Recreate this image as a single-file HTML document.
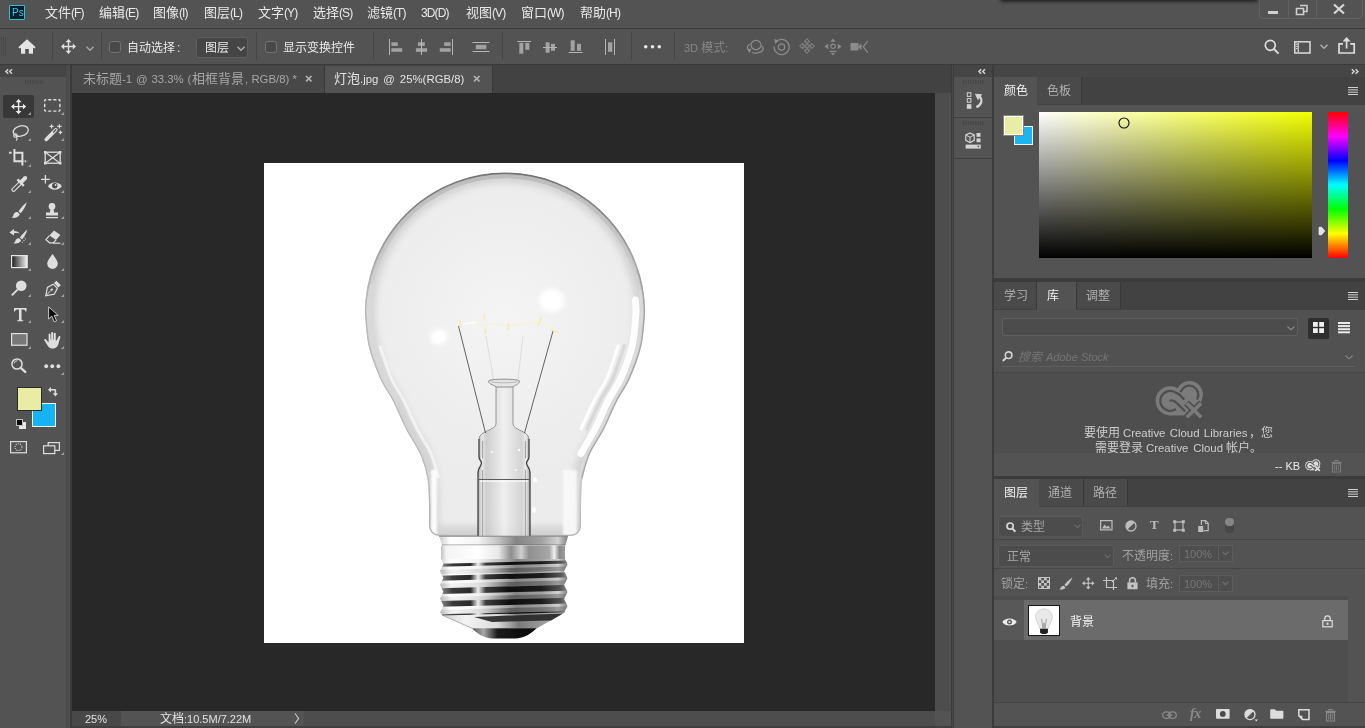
<!DOCTYPE html>
<html lang="zh-CN"><head><meta charset="utf-8"><title>Photoshop</title>
<style>
html,body{margin:0;padding:0;background:#535353;}
body{width:1365px;height:728px;overflow:hidden;font-family:"Liberation Sans","Noto Sans CJK SC",sans-serif;}
#app{position:relative;width:1365px;height:728px;overflow:hidden;background:#535353;}
.b{position:absolute;box-sizing:border-box;}
.i{position:absolute;overflow:visible;}
.t{position:absolute;white-space:nowrap;line-height:16px;height:16px;letter-spacing:0;will-change:transform;}
.c{font-family:"Liberation Sans","Noto Sans CJK SC",sans-serif;letter-spacing:0;}
.c12{font-size:12px;}
.c13{font-size:13px;}
.tj{text-align:justify;text-align-last:justify;}

</style></head>
<body>
<div id="app">
<!-- menu bar -->
<div class="b" style="left:0px;top:0px;width:1365px;height:28px;background:#535353;"></div>
<div class="b" style="left:0px;top:28px;width:1365px;height:1px;background:#3b3b3b;"></div>
<div class="b" style="left:1002px;top:-6px;width:254px;height:6px;background:#222;box-shadow:0 0 3.5px 1.5px rgba(20,20,20,.85)"></div>
<div class="b" style="left:8.8px;top:4.8px;width:16.4px;height:15.4px;background:#071d30;border:1.2px solid #2bc3cf;border-radius:1px"></div>
<div class="t " style="left:12.3px;top:4.6px;font-size:10px;color:#3ccbd6;letter-spacing:0.2px">Ps</div>
<div class="t " style="left:45px;top:4.5px;font-size:12px;color:#e8e8e8;letter-spacing:-0.9px"><span class="c c13">文件</span>(F)</div>
<div class="t " style="left:99px;top:4.5px;font-size:12px;color:#e8e8e8;letter-spacing:-0.9px"><span class="c c13">编辑</span>(E)</div>
<div class="t " style="left:153px;top:4.5px;font-size:12px;color:#e8e8e8;letter-spacing:-0.9px"><span class="c c13">图像</span>(I)</div>
<div class="t " style="left:204px;top:4.5px;font-size:12px;color:#e8e8e8;letter-spacing:-0.9px"><span class="c c13">图层</span>(L)</div>
<div class="t " style="left:258px;top:4.5px;font-size:12px;color:#e8e8e8;letter-spacing:-0.9px"><span class="c c13">文字</span>(Y)</div>
<div class="t " style="left:313px;top:4.5px;font-size:12px;color:#e8e8e8;letter-spacing:-0.9px"><span class="c c13">选择</span>(S)</div>
<div class="t " style="left:367px;top:4.5px;font-size:12px;color:#e8e8e8;letter-spacing:-0.9px"><span class="c c13">滤镜</span>(T)</div>
<div class="t " style="left:421px;top:4.5px;font-size:12px;color:#e8e8e8;letter-spacing:-0.9px">3D(D)</div>
<div class="t " style="left:466px;top:4.5px;font-size:12px;color:#e8e8e8;letter-spacing:-0.9px"><span class="c c13">视图</span>(V)</div>
<div class="t " style="left:521px;top:4.5px;font-size:12px;color:#e8e8e8;letter-spacing:-0.9px"><span class="c c13">窗口</span>(W)</div>
<div class="t " style="left:580px;top:4.5px;font-size:12px;color:#e8e8e8;letter-spacing:-0.9px"><span class="c c13">帮助</span>(H)</div>
<div class="b" style="left:1259px;top:-4px;width:104px;height:23px;background:transparent;border:1px solid #626262;border-radius:4px"></div>
<div class="b" style="left:1288px;top:0px;width:1px;height:18px;background:#626262;"></div>
<div class="b" style="left:1316px;top:0px;width:1px;height:18px;background:#626262;"></div>
<div class="b" style="left:1268px;top:11px;width:10px;height:3px;background:#cfcfcf;"></div>
<svg class="i" style="left:1296px;top:5px;" width="12" height="11" viewBox="0 0 12 11"><path d="M4 0.5h7v6h-3M0.5 3.5h7v6h-7z" fill="none" stroke="#cfcfcf" stroke-width="1.6"/></svg>
<svg class="i" style="left:1333px;top:4px;" width="12" height="10" viewBox="0 0 12 10"><path d="M1 0.5l10 9M11 0.5l-10 9" stroke="#d8d8d8" stroke-width="2.2" fill="none"/></svg>
<!-- options bar -->
<div class="b" style="left:0px;top:29px;width:1365px;height:35px;background:#535353;"></div>
<div class="b" style="left:0px;top:64px;width:1365px;height:1px;background:#3b3b3b;"></div>
<div class="b" style="left:0px;top:65px;width:1365px;height:12px;background:#424242;"></div>
<svg class="i" style="left:0px;top:37px;" width="8" height="19" viewBox="0 0 8 19"><path d="M1.5 0v19M3.5 0v19M5.5 0v19" stroke="#484848" stroke-width="1"/></svg>
<svg class="i" style="left:18px;top:39px;" width="18" height="15" viewBox="0 0 18 15"><path d="M9 0.3L0.3 8.2L1.8 9.6L3 8.5V14.7H7.2V10H10.8V14.7H15V8.5L16.2 9.6L17.7 8.2Z" fill="#e4e4e4"/></svg>
<div class="b" style="left:52px;top:32px;width:1px;height:28px;background:#454545;"></div>
<svg class="i" style="left:61px;top:39px;" width="15" height="15" viewBox="0 0 15 15"><path d="M7.5 0L4.6 3.2H6.8V6.8H3.2V4.6L0 7.5L3.2 10.4V8.2H6.8V11.8H4.6L7.5 15L10.4 11.8H8.2V8.2H11.8V10.4L15 7.5L11.8 4.6V6.8H8.2V3.2H10.4Z" fill="#e0e0e0"/></svg>
<svg class="i" style="left:86px;top:45.5px;" width="8" height="5" viewBox="0 0 8 5"><path d="M0.5 0.7L4 4.2L7.5 0.7" fill="none" stroke="#a8a8a8" stroke-width="1.4"/></svg>
<div class="b" style="left:101px;top:32px;width:1px;height:28px;background:#454545;"></div>
<div class="b" style="left:109px;top:40.5px;width:12px;height:12px;background:#484848;border:1px solid #727272;border-radius:3px"></div>
<div class="t " style="left:127px;top:40px;font-size:11px;color:#e8e8e8;"><span class="c c12">自动选择</span></div>
<div class="t " style="left:177px;top:40px;font-size:12px;color:#e8e8e8;">:</div>
<div class="b" style="left:196px;top:36.5px;width:51.5px;height:21px;background:#454545;border:1px solid #5f5f5f;border-radius:3px"></div>
<div class="t " style="left:204.5px;top:40px;font-size:11px;color:#e8e8e8;"><span class="c c12">图层</span></div>
<svg class="i" style="left:236.5px;top:45.5px;" width="8" height="5" viewBox="0 0 8 5"><path d="M0.5 0.7L4 4.2L7.5 0.7" fill="none" stroke="#b0b0b0" stroke-width="1.4"/></svg>
<div class="b" style="left:256px;top:32px;width:1px;height:28px;background:#454545;"></div>
<div class="b" style="left:265px;top:40.5px;width:12px;height:12px;background:#484848;border:1px solid #727272;border-radius:3px"></div>
<div class="t " style="left:283px;top:40px;font-size:11px;color:#e8e8e8;"><span class="c c12">显示变换控件</span></div>
<div class="b" style="left:373px;top:32px;width:1px;height:28px;background:#454545;"></div>
<svg class="i" style="left:388px;top:38px;" width="16" height="18" viewBox="0 0 16 18"><rect x="3.4" y="4.3" width="6.4" height="3.6" fill="#a2a2a2"/><rect x="3.4" y="10.2" width="10.8" height="3.6" fill="#a2a2a2"/><path d="M1.5 1V17" stroke="#b4b4b4" stroke-width="1" fill="none"/></svg>
<svg class="i" style="left:415px;top:38px;" width="14" height="18" viewBox="0 0 14 18"><rect x="3" y="4.3" width="6.8" height="3.6" fill="#a2a2a2"/><rect x="0.9" y="10.2" width="11.2" height="3.6" fill="#a2a2a2"/><path d="M6.5 1V17" stroke="#b4b4b4" stroke-width="1" fill="none"/></svg>
<svg class="i" style="left:439px;top:38px;" width="15" height="18" viewBox="0 0 15 18"><rect x="5.2" y="4.3" width="6.4" height="3.6" fill="#a2a2a2"/><rect x="0.8" y="10.2" width="10.8" height="3.6" fill="#a2a2a2"/><path d="M13.5 1V17" stroke="#b4b4b4" stroke-width="1" fill="none"/></svg>
<svg class="i" style="left:472px;top:38px;" width="18" height="18" viewBox="0 0 18 18"><rect x="3.8" y="6.8" width="10.5" height="4.4" fill="#a2a2a2"/><path d="M0.5 4.5H17.5" stroke="#b4b4b4" stroke-width="1" fill="none"/><path d="M0.5 13.5H17.5" stroke="#b4b4b4" stroke-width="1" fill="none"/></svg>
<div class="b" style="left:502px;top:32px;width:1px;height:28px;background:#454545;"></div>
<svg class="i" style="left:517px;top:38px;" width="15" height="18" viewBox="0 0 15 18"><rect x="2.3" y="4.9" width="4" height="10.8" fill="#a2a2a2"/><rect x="8.3" y="4.9" width="4" height="6.9" fill="#a2a2a2"/><path d="M0.4 3.5H14.2" stroke="#b4b4b4" stroke-width="1" fill="none"/></svg>
<svg class="i" style="left:543px;top:38px;" width="15" height="18" viewBox="0 0 15 18"><rect x="2.6" y="4.3" width="4" height="10.4" fill="#a2a2a2"/><rect x="8" y="5.8" width="4" height="7" fill="#a2a2a2"/><path d="M0 9.5H14" stroke="#b4b4b4" stroke-width="1" fill="none"/></svg>
<svg class="i" style="left:568px;top:38px;" width="15" height="18" viewBox="0 0 15 18"><rect x="2.7" y="2.3" width="4" height="10.5" fill="#a2a2a2"/><rect x="9" y="5.8" width="4" height="7" fill="#a2a2a2"/><path d="M0.8 14.5H14.6" stroke="#b4b4b4" stroke-width="1" fill="none"/></svg>
<svg class="i" style="left:604px;top:38px;" width="12" height="18" viewBox="0 0 12 18"><rect x="4" y="4.3" width="4.3" height="9.5" fill="#a2a2a2"/><path d="M1.5 1V17" stroke="#b4b4b4" stroke-width="1" fill="none"/><path d="M10.5 1V17" stroke="#b4b4b4" stroke-width="1" fill="none"/></svg>
<div class="b" style="left:631px;top:32px;width:1px;height:28px;background:#454545;"></div>
<svg class="i" style="left:643px;top:44px;" width="20" height="6" viewBox="0 0 20 6"><circle cx="2.7" cy="2.8" r="1.8" fill="#e6e6e6"/><circle cx="9.5" cy="2.8" r="1.8" fill="#e6e6e6"/><circle cx="16.3" cy="2.8" r="1.8" fill="#e6e6e6"/></svg>
<div class="b" style="left:674px;top:32px;width:1px;height:28px;background:#454545;"></div>
<div class="t " style="left:683.5px;top:40px;font-size:11px;color:#878787;">3D <span class="c c12">模式</span>:</div>
<svg class="i" style="left:745px;top:38px;" width="20" height="18" viewBox="0 0 20 18"><ellipse cx="11" cy="7" rx="5" ry="4.6" fill="none" stroke="#8c8c8c" stroke-width="1.2"/><path d="M5.5 6C2 7 1.5 10 4 12.5M7 14.5C11 16 17 14.5 18 11.5C18.5 10 17.6 8.6 16.5 8" fill="none" stroke="#8c8c8c" stroke-width="1.2"/><path d="M2 11L6.5 10.8L4.6 15Z" fill="#8c8c8c"/></svg>
<svg class="i" style="left:772px;top:37px;" width="19" height="19" viewBox="0 0 19 19"><circle cx="9.5" cy="10" r="3.2" fill="none" stroke="#8c8c8c" stroke-width="1.2"/><path d="M4 4.8A7.6 7.6 0 1 1 2 9.5" fill="none" stroke="#8c8c8c" stroke-width="1.2"/><path d="M2.2 2L6.8 3.6L3.2 7Z" fill="#8c8c8c"/></svg>
<svg class="i" style="left:798.5px;top:38.4px;" width="16" height="16" viewBox="0 0 16 16"><path d="M8 0.6L5.2 3.8H7.2V7.2H3.8V5.2L0.6 8L3.8 10.8V8.8H7.2V12.2H5.2L8 15.4L10.8 12.2H8.8V8.8H12.2V10.8L15.4 8L12.2 5.2V7.2H8.8V3.8H10.8Z" fill="none" stroke="#8c8c8c" stroke-width="0.95" stroke-linejoin="round"/></svg>
<svg class="i" style="left:824px;top:38px;" width="18" height="18" viewBox="0 0 18 18"><path d="M9 0.5L6.3 3.8H11.7ZM0.5 8.5L4.2 5.8V11.2ZM17.5 8.5L13.8 5.8V11.2ZM9 17.5L5 12.8H13Z" fill="#8c8c8c"/><circle cx="9" cy="8.3" r="2.2" fill="none" stroke="#8c8c8c" stroke-width="1.1"/><path d="M6.2 14.6H11.8" stroke="#535353" stroke-width="1"/></svg>
<svg class="i" style="left:850px;top:40px;" width="20" height="14" viewBox="0 0 20 14"><rect x="0.5" y="3" width="8" height="7.5" fill="#8c8c8c"/><path d="M8.5 6L11.5 3.6V10L8.5 7.6Z" fill="#8c8c8c"/><path d="M17.8 1L13.2 6.8L17.8 12.6" fill="none" stroke="#8c8c8c" stroke-width="1.2"/></svg>
<svg class="i" style="left:1264px;top:39px;" width="16" height="16" viewBox="0 0 16 16"><circle cx="6.3" cy="6.3" r="5" fill="none" stroke="#dcdcdc" stroke-width="1.7"/><path d="M10 10L14.6 14.6" stroke="#dcdcdc" stroke-width="2"/></svg>
<svg class="i" style="left:1294px;top:41px;" width="17" height="13" viewBox="0 0 17 13"><rect x="0.8" y="0.8" width="15.2" height="11.2" fill="none" stroke="#dcdcdc" stroke-width="1.5"/><path d="M4.2 2V11" stroke="#dcdcdc" stroke-width="1.2"/><path d="M2 3.2h1.6M2 5.4h1.6M2 7.6h1.6" stroke="#dcdcdc" stroke-width="1"/></svg>
<svg class="i" style="left:1320px;top:44px;" width="8" height="5" viewBox="0 0 8 5"><path d="M0.5 0.7L4 4.2L7.5 0.7" fill="none" stroke="#b0b0b0" stroke-width="1.4"/></svg>
<svg class="i" style="left:1338px;top:37px;" width="18" height="17" viewBox="0 0 18 17"><path d="M5 6.8H1V16H16.2V6.8H12.2" fill="none" stroke="#dcdcdc" stroke-width="1.7"/><path d="M8.6 11.5V3.2" stroke="#dcdcdc" stroke-width="1.7"/><path d="M8.6 0L4.6 4.6H12.6Z" fill="#dcdcdc"/></svg>
<!-- document window -->
<div class="b" style="left:72px;top:65px;width:880px;height:28px;background:#424242;"></div>
<div class="b" style="left:72px;top:66px;width:252px;height:27px;background:#484848;"></div>
<div class="b" style="left:324px;top:66px;width:1px;height:27px;background:#383838;"></div>
<div class="b" style="left:325px;top:66px;width:167px;height:27px;background:#535353;"></div>
<div class="b" style="left:492px;top:66px;width:1px;height:27px;background:#383838;"></div>
<div class="t " style="left:83px;top:71px;font-size:11px;color:#a6a6a6;"><span class="c c13">未标题</span></div>
<div class="t tj" style="left:122px;top:71px;font-size:11.4px;color:#a6a6a6;width:69.4px;">-1 @ 33.3% (</div>
<div class="t " style="left:191.8px;top:71px;font-size:11px;color:#a6a6a6;"><span class="c c13">相框背景</span></div>
<div class="t tj" style="left:245px;top:71px;font-size:11.4px;color:#a6a6a6;width:52px;">, RGB/8) *</div>
<svg class="i" style="left:305px;top:75px;" width="8" height="8" viewBox="0 0 8 8"><path d="M1 1L6.5 6.5M6.5 1L1 6.5" stroke="#b4b4b4" stroke-width="1.7" fill="none"/></svg>
<div class="t " style="left:334px;top:71px;font-size:11px;color:#e2e2e2;"><span class="c c13">灯泡</span></div>
<div class="t tj" style="left:360px;top:71px;font-size:11.4px;color:#e2e2e2;width:104.4px;">.jpg @ 25%(RGB/8)</div>
<svg class="i" style="left:473px;top:75px;" width="8" height="8" viewBox="0 0 8 8"><path d="M1 1L6.5 6.5M6.5 1L1 6.5" stroke="#b4b4b4" stroke-width="1.7" fill="none"/></svg>
<div class="b" style="left:72px;top:93px;width:863px;height:618px;background:#282828;"></div>
<div class="b" style="left:264px;top:163px;width:480px;height:480px;background:#fff;"></div>
<svg class="i" style="left:264px;top:163px" width="480" height="480" viewBox="264 163 480 480"><defs><radialGradient id="gl" cx="505" cy="320" r="150" gradientUnits="userSpaceOnUse"><stop offset="0" stop-color="#f4f4f4"/><stop offset="0.6" stop-color="#efefef"/><stop offset="1" stop-color="#ececec"/></radialGradient><linearGradient id="edge" x1="0" y1="173" x2="0" y2="540" gradientUnits="userSpaceOnUse"><stop offset="0" stop-color="#8f8f8f"/><stop offset="0.2" stop-color="#adadad"/><stop offset="0.45" stop-color="#cbcbcb"/><stop offset="0.75" stop-color="#d4d4d4"/><stop offset="1" stop-color="#b4b4b4"/></linearGradient><linearGradient id="band" x1="0" y1="173" x2="0" y2="335" gradientUnits="userSpaceOnUse"><stop offset="0" stop-color="#bcbcbc"/><stop offset="0.5" stop-color="#c9c9c9"/><stop offset="0.8" stop-color="#d6d6d6" stop-opacity="0.8"/><stop offset="1" stop-color="#dddddd" stop-opacity="0"/></linearGradient><filter id="bl3" x="-20%" y="-20%" width="140%" height="140%"><feGaussianBlur stdDeviation="3"/></filter><linearGradient id="rimd" x1="0" y1="173" x2="0" y2="300" gradientUnits="userSpaceOnUse"><stop offset="0" stop-color="#6f6f6f" stop-opacity="0.95"/><stop offset="0.45" stop-color="#858585" stop-opacity="0.75"/><stop offset="1" stop-color="#9a9a9a" stop-opacity="0"/></linearGradient><linearGradient id="mh" x1="440" y1="0" x2="567" y2="0" gradientUnits="userSpaceOnUse"><stop offset="0" stop-color="#b9b9b9"/><stop offset="0.05" stop-color="#f4f4f4"/><stop offset="0.3" stop-color="#ffffff"/><stop offset="0.46" stop-color="#e8e8e8"/><stop offset="0.56" stop-color="#8d8d8d"/><stop offset="0.64" stop-color="#cfcfcf"/><stop offset="0.7" stop-color="#8f8f8f"/><stop offset="0.86" stop-color="#a8a8a8"/><stop offset="0.9" stop-color="#f0f0f0"/><stop offset="0.94" stop-color="#8a8a8a"/><stop offset="1" stop-color="#a0a0a0"/></linearGradient><linearGradient id="th" x1="440" y1="0" x2="567" y2="0" gradientUnits="userSpaceOnUse"><stop offset="0" stop-color="#cfcfcf"/><stop offset="0.08" stop-color="#ffffff"/><stop offset="0.3" stop-color="#f4f4f4"/><stop offset="0.46" stop-color="#c2c2c2"/><stop offset="0.6" stop-color="#858585"/><stop offset="0.8" stop-color="#a2a2a2"/><stop offset="0.93" stop-color="#d2d2d2"/><stop offset="1" stop-color="#868686"/></linearGradient><linearGradient id="dk" x1="440" y1="0" x2="567" y2="0" gradientUnits="userSpaceOnUse"><stop offset="0" stop-color="#8c8c8c"/><stop offset="0.1" stop-color="#3a3a3a"/><stop offset="0.24" stop-color="#2a2a2a"/><stop offset="0.3" stop-color="#f0f0f0"/><stop offset="0.36" stop-color="#3c3c3c"/><stop offset="0.55" stop-color="#0e0e0e"/><stop offset="0.8" stop-color="#1c1c1c"/><stop offset="0.95" stop-color="#555"/><stop offset="1" stop-color="#888"/></linearGradient><linearGradient id="gm" x1="440" y1="0" x2="567" y2="0" gradientUnits="userSpaceOnUse"><stop offset="0" stop-color="#777" stop-opacity="0.25"/><stop offset="0.12" stop-color="#999" stop-opacity="0.12"/><stop offset="0.36" stop-color="#777" stop-opacity="0.2"/><stop offset="0.55" stop-color="#3e3e3e" stop-opacity="0.6"/><stop offset="0.85" stop-color="#4a4a4a" stop-opacity="0.5"/><stop offset="1" stop-color="#666" stop-opacity="0.4"/></linearGradient><linearGradient id="cone" x1="440" y1="0" x2="567" y2="0" gradientUnits="userSpaceOnUse"><stop offset="0" stop-color="#c9c9c9"/><stop offset="0.2" stop-color="#f4f4f4"/><stop offset="0.45" stop-color="#dcdcdc"/><stop offset="0.62" stop-color="#7a7a7a"/><stop offset="0.8" stop-color="#9a9a9a"/><stop offset="1" stop-color="#c8c8c8"/></linearGradient><linearGradient id="tip" x1="472" y1="0" x2="536" y2="0" gradientUnits="userSpaceOnUse"><stop offset="0" stop-color="#555"/><stop offset="0.18" stop-color="#a8a8a8"/><stop offset="0.4" stop-color="#1a1a1a"/><stop offset="1" stop-color="#050505"/></linearGradient><linearGradient id="stem" x1="478" y1="0" x2="530" y2="0" gradientUnits="userSpaceOnUse"><stop offset="0" stop-color="#a9a9a9"/><stop offset="0.08" stop-color="#e6e6e6"/><stop offset="0.16" stop-color="#c9c9c9"/><stop offset="0.5" stop-color="#f0f0f0"/><stop offset="0.84" stop-color="#d0d0d0"/><stop offset="0.92" stop-color="#e9e9e9"/><stop offset="1" stop-color="#9c9c9c"/></linearGradient><filter id="bl1" x="-20%" y="-20%" width="140%" height="140%"><feGaussianBlur stdDeviation="1.2"/></filter><filter id="bl2" x="-50%" y="-50%" width="200%" height="200%"><feGaussianBlur stdDeviation="2.2"/></filter><clipPath id="gclip"><path d="M365.0 313A140.0 140.0 0 0 1 645.0 313C644.4 318.5 643.8 335.0 641.2 346.0C638.6 357.0 633.5 370.0 629.5 379.0C625.5 388.0 621.8 391.7 617.5 400.0C613.2 408.3 608.6 420.1 604.0 429.0C599.4 437.9 593.6 445.4 590.0 453.6C586.4 461.8 584.0 469.8 582.5 478.0C581.0 486.2 581.2 495.3 581.0 503.0C580.8 510.7 581.0 520.5 581.0 524.0Q581.0 536.0 569.0 536.0L441.0 536.0Q429.0 536.0 429.0 524C429.0 520.5 429.2 510.7 429.0 503.0C428.8 495.3 429.0 486.2 427.5 478.0C426.0 469.8 423.6 461.8 420.0 453.6C416.4 445.4 410.6 437.9 406.0 429.0C401.4 420.1 396.8 408.3 392.5 400.0C388.2 391.7 384.4 388.0 380.5 379.0C376.6 370.0 371.4 357.0 368.8 346.0C366.2 335.0 365.6 318.5 365.0 313.0Z"/></clipPath></defs><path d="M365.0 313A140.0 140.0 0 0 1 645.0 313C644.4 318.5 643.8 335.0 641.2 346.0C638.6 357.0 633.5 370.0 629.5 379.0C625.5 388.0 621.8 391.7 617.5 400.0C613.2 408.3 608.6 420.1 604.0 429.0C599.4 437.9 593.6 445.4 590.0 453.6C586.4 461.8 584.0 469.8 582.5 478.0C581.0 486.2 581.2 495.3 581.0 503.0C580.8 510.7 581.0 520.5 581.0 524.0Q581.0 536.0 569.0 536.0L441.0 536.0Q429.0 536.0 429.0 524C429.0 520.5 429.2 510.7 429.0 503.0C428.8 495.3 429.0 486.2 427.5 478.0C426.0 469.8 423.6 461.8 420.0 453.6C416.4 445.4 410.6 437.9 406.0 429.0C401.4 420.1 396.8 408.3 392.5 400.0C388.2 391.7 384.4 388.0 380.5 379.0C376.6 370.0 371.4 357.0 368.8 346.0C366.2 335.0 365.6 318.5 365.0 313.0Z" fill="url(#gl)"/><g clip-path="url(#gclip)"><path d="M365.0 313A140.0 140.0 0 0 1 645.0 313C644.4 318.5 643.8 335.0 641.2 346.0C638.6 357.0 633.5 370.0 629.5 379.0C625.5 388.0 621.8 391.7 617.5 400.0C613.2 408.3 608.6 420.1 604.0 429.0C599.4 437.9 593.6 445.4 590.0 453.6C586.4 461.8 584.0 469.8 582.5 478.0C581.0 486.2 581.2 495.3 581.0 503.0C580.8 510.7 581.0 520.5 581.0 524.0Q581.0 536.0 569.0 536.0L441.0 536.0Q429.0 536.0 429.0 524C429.0 520.5 429.2 510.7 429.0 503.0C428.8 495.3 429.0 486.2 427.5 478.0C426.0 469.8 423.6 461.8 420.0 453.6C416.4 445.4 410.6 437.9 406.0 429.0C401.4 420.1 396.8 408.3 392.5 400.0C388.2 391.7 384.4 388.0 380.5 379.0C376.6 370.0 371.4 357.0 368.8 346.0C366.2 335.0 365.6 318.5 365.0 313.0Z" fill="none" stroke="#cdcdcd" stroke-width="20" opacity="0.8" filter="url(#bl3)"/><path d="M369.8 335A137 137 0 1 1 640.2 335" fill="none" stroke="url(#band)" stroke-width="4.6"/><path d="M635.4 300.0C635.4 301.0 635.7 304.0 635.8 306.0C635.9 308.0 636.0 310.8 636.0 312.0C636.0 313.2 636.6 307.3 636.0 313.0C635.4 318.7 634.8 335.0 632.2 346.0C629.6 357.0 624.5 370.0 620.5 379.0C616.5 388.0 612.8 391.7 608.5 400.0C604.2 408.3 599.6 420.1 595.0 429.0C590.4 437.9 583.3 449.5 581.0 453.6" fill="none" stroke="#ffffff" stroke-width="7" opacity="0.95" stroke-linecap="round"/><path d="M624.2 346.0C622.2 351.5 616.5 370.0 612.5 379.0C608.5 388.0 604.8 391.7 600.5 400.0C596.2 408.3 589.2 424.2 587.0 429.0" fill="none" stroke="#d6d6d6" stroke-width="3.5" opacity="0.9" stroke-linecap="round"/><path d="M618.2 346.0C616.2 351.5 610.5 370.0 606.5 379.0C602.5 388.0 598.8 391.7 594.5 400.0C590.2 408.3 583.2 424.2 581.0 429.0" fill="none" stroke="#ffffff" stroke-width="3" opacity="0.9" stroke-linecap="round"/><path d="M639.5 290.0C639.7 291.0 640.2 294.0 640.4 296.0C640.7 298.0 640.9 300.0 641.1 302.0C641.2 304.0 641.3 306.2 641.4 308.0C641.5 309.8 642.1 306.7 641.5 313.0C640.9 319.3 640.3 335.0 637.7 346.0C635.1 357.0 630.0 370.0 626.0 379.0C622.0 388.0 618.2 391.7 614.0 400.0C609.8 408.3 605.1 420.1 600.5 429.0C595.9 437.9 590.1 445.4 586.5 453.6C582.9 461.8 580.5 469.8 579.0 478.0C577.5 486.2 577.8 495.3 577.5 503.0C577.2 510.7 577.5 520.5 577.5 524.0" fill="none" stroke="#dcdcdc" stroke-width="2.5" opacity="0.8"/><path d="M372.9 285.0C372.7 286.0 372.1 289.0 371.8 291.0C371.5 293.0 371.2 295.0 371.0 297.0C370.7 299.0 370.5 301.0 370.4 303.0C370.2 305.0 370.1 307.3 370.1 309.0C370.0 310.7 369.4 306.8 370.0 313.0C370.6 319.2 371.2 335.0 373.8 346.0C376.4 357.0 381.6 370.0 385.5 379.0C389.4 388.0 395.5 396.5 397.5 400.0" fill="none" stroke="#dadada" stroke-width="6" opacity="0.75"/><path d="M379.8 346.0C381.8 351.5 387.6 370.0 391.5 379.0C395.4 388.0 399.2 391.7 403.5 400.0C407.8 408.3 412.4 420.1 417.0 429.0C421.6 437.9 427.4 445.4 431.0 453.6C434.6 461.8 437.2 473.9 438.5 478.0" fill="none" stroke="#f6f6f6" stroke-width="3" opacity="0.8"/><path d="M431 470V536H437V470Z" fill="#ffffff" opacity="0.9" filter="url(#bl1)"/><path d="M563 470V536H577V470Z" fill="#fafafa" opacity="0.9" filter="url(#bl1)"/></g><path d="M365.6 313A139.4 139.4 0 0 1 644.4 313C643.8 318.5 643.2 335.0 640.6 346.0C638.0 357.0 632.9 370.0 628.9 379.0C624.9 388.0 621.1 391.7 616.9 400.0C612.6 408.3 608.0 420.1 603.4 429.0C598.8 437.9 593.0 445.4 589.4 453.6C585.8 461.8 583.4 469.8 581.9 478.0C580.4 486.2 580.6 495.3 580.4 503.0C580.1 510.7 580.4 520.5 580.4 524.0Q580.4 535.4 569.0 535.4L441.0 535.4Q429.6 535.4 429.6 524C429.6 520.5 429.9 510.7 429.6 503.0C429.4 495.3 429.6 486.2 428.1 478.0C426.6 469.8 424.2 461.8 420.6 453.6C417.0 445.4 411.2 437.9 406.6 429.0C402.0 420.1 397.4 408.3 393.1 400.0C388.9 391.7 385.1 388.0 381.1 379.0C377.2 370.0 372.0 357.0 369.4 346.0C366.8 335.0 366.2 318.5 365.6 313.0Z" fill="none" stroke="url(#edge)" stroke-width="1.3"/><path d="M368.5 290A138.4 138.4 0 0 1 641.5 290" fill="none" stroke="#b8b8b8" stroke-width="1.1" opacity="0.6"/><path d="M366.0 300A139.6 139.6 0 0 1 644.0 300" fill="none" stroke="url(#rimd)" stroke-width="1.5"/><path d="M637.6 270.0C637.9 271.0 638.8 274.0 639.4 276.0C640.0 278.0 640.5 280.0 640.9 282.0C641.4 284.0 641.8 286.0 642.1 288.0C642.5 290.0 642.8 292.0 643.1 294.0C643.4 296.0 643.6 298.0 643.8 300.0C644.0 302.0 644.1 304.0 644.2 306.0C644.3 308.0 644.4 310.8 644.4 312.0C644.4 313.2 645.0 307.3 644.4 313.0C643.8 318.7 643.2 335.0 640.6 346.0C638.0 357.0 632.9 370.0 628.9 379.0C624.9 388.0 621.1 391.7 616.9 400.0C612.6 408.3 608.0 420.1 603.4 429.0C598.8 437.9 593.0 445.4 589.4 453.6C585.8 461.8 583.1 473.9 581.9 478.0" fill="none" stroke="#9a9a9a" stroke-width="1.2" opacity="0.8"/><path d="M367.5 290.0C367.4 291.0 366.9 294.0 366.6 296.0C366.4 298.0 366.2 300.0 366.0 302.0C365.9 304.0 365.8 306.2 365.7 308.0C365.6 309.8 365.0 306.7 365.6 313.0C366.2 319.3 366.8 335.0 369.4 346.0C372.0 357.0 377.2 370.0 381.1 379.0C385.1 388.0 388.9 391.7 393.1 400.0C397.4 408.3 402.0 420.1 406.6 429.0C411.2 437.9 417.0 445.4 420.6 453.6C424.2 461.8 426.6 469.8 428.1 478.0C429.6 486.2 429.4 495.3 429.6 503.0C429.9 510.7 429.6 520.5 429.6 524.0" fill="none" stroke="#b4b4b4" stroke-width="1.1" opacity="0.8"/><ellipse cx="551.5" cy="300.5" rx="13" ry="12" fill="#ffffff" opacity="0.9" filter="url(#bl2)"/><ellipse cx="551.5" cy="300.5" rx="9.5" ry="8.5" fill="#ffffff"/><ellipse cx="439" cy="337" rx="9" ry="8" fill="#ffffff" opacity="0.9" filter="url(#bl2)"/><ellipse cx="439" cy="337" rx="6.5" ry="5.5" fill="#ffffff"/><path d="M496 386V424C496 430 479 431 479 439V457C479 460 481.5 461 481.5 463C481.5 466 478 468 478 472V536H530V472C530 468 526.5 466 526.5 463C526.5 461 529 460 529 457V439C529 431 513 430 513 424V386Z" fill="url(#stem)" opacity="0.85"/><path d="M496 386V424C496 430 479 431 479 439M513 386V424C513 430 529 431 529 439" fill="none" stroke="#8c8c8c" stroke-width="0.9"/><path d="M479 439V457C479 460 481.5 461 481.5 463C481.5 466 478 468 478 472V536M529 439V457C529 460 526.5 461 526.5 463C526.5 466 530 468 530 472V536" fill="none" stroke="#3c3c3c" stroke-width="1.25"/><path d="M482.6 441V458M482.6 470V536M525.4 441V458M525.4 470V536" stroke="#8e8e8e" stroke-width="0.8" fill="none"/><path d="M479 479.5H529" stroke="#5c5c5c" stroke-width="1.1"/><path d="M480 481.2H528" stroke="#fff" stroke-width="1.2" opacity="0.9"/><path d="M488.5 381C488.5 378.6 519.5 378.6 519.5 381C519.5 384.4 514 385.4 513 387H496C495 385.4 488.5 384.4 488.5 381Z" fill="#e4e4e4" stroke="#858585" stroke-width="0.9"/><path d="M491 381.6C497 383.2 511 383.2 517 381.6" fill="none" stroke="#adadad" stroke-width="0.8"/><circle cx="492" cy="452" r="1" fill="#fff"/><circle cx="519" cy="450" r="1.2" fill="#fff"/><circle cx="516" cy="470" r="1" fill="#fff"/><ellipse cx="535" cy="480" rx="2.2" ry="2.6" fill="#fff"/><ellipse cx="534" cy="510" rx="2" ry="3" fill="#fff" opacity="0.9"/><path d="M458.5 326L485.5 433M553 331L524.5 433" stroke="#333" stroke-width="0.75" fill="none"/><path d="M486 336L493.5 379M523 336L518 379" stroke="#d2d2d2" stroke-width="0.7" fill="none"/><path d="M460 325L470 323L484 325L497 324L508 326L522 324L538 322L548 326L556 331" fill="none" stroke="#f6f3d0" stroke-width="1.3" opacity="0.9"/><path d="M460 320V328M484.4 314.5V320M485.5 329V333.5M508.3 322.5V329.5M541.5 317L538 325M552 330L558 333" stroke="#f4e9ac" stroke-width="1.6" fill="none" stroke-linecap="round" opacity="0.8"/><path d="M463 324L476 322.5" stroke="#ffffff" stroke-width="1.4" opacity="0.9"/><path d="M439 536H568L565.5 545H442Z" fill="url(#th)"/><path d="M439 536.3H568" stroke="#8a8a8a" stroke-width="1.1"/><path d="M442 545H565.5" stroke="#4a4a4a" stroke-width="1" opacity="0.55"/><rect x="441" y="545.5" width="124" height="14" fill="url(#mh)"/><clipPath id="tclip"><path d="M441 559L443.5 564.2L440.0 571.0L443.5 578.0L440.0 584.8L443.5 591.8L440.0 598.6L443.5 605.6L440.0 612.4L443 616L565 613L564.0 612.7L567.5 605.9L564.0 598.9L567.5 592.1L564.0 585.1L567.5 578.3L564.0 571.3L567.5 564.5L565 559Z"/></clipPath><path d="M441 559L443.5 564.2L440.0 571.0L443.5 578.0L440.0 584.8L443.5 591.8L440.0 598.6L443.5 605.6L440.0 612.4L443 616L565 613L564.0 612.7L567.5 605.9L564.0 598.9L567.5 592.1L564.0 585.1L567.5 578.3L564.0 571.3L567.5 564.5L565 559Z" fill="url(#th)"/><g clip-path="url(#tclip)"><path d="M438 569.8L570 566.4V570.8L438 574.2Z" fill="url(#gm)"/><path d="M438 563.8L570 560.4V563.4L438 566.8Z" fill="url(#dk)"/><path d="M438 583.7L570 580.3V584.7L438 588.1Z" fill="url(#gm)"/><path d="M438 575.7L570 572.3V577.3L438 580.7Z" fill="url(#dk)"/><path d="M438 597.0L570 593.6V598.0L438 601.4Z" fill="url(#gm)"/><path d="M438 588.2L570 584.8V590.6L438 594.0Z" fill="url(#dk)"/><path d="M438 609.9L570 606.5V610.9L438 614.3Z" fill="url(#gm)"/><path d="M438 601.1L570 597.7V603.5L438 606.9Z" fill="url(#dk)"/><path d="M438 622.4L570 619.0V623.4L438 626.8Z" fill="url(#gm)"/><path d="M438 614.4L570 611.0V616.0L438 619.4Z" fill="url(#dk)"/></g><path d="M443 615.5L565 612.5L536.5 628.5H472Z" fill="url(#cone)"/><path d="M474 617L563 613.5L551 620.5L492 622Z" fill="#262626" opacity="0.9"/><path d="M444 616L472 628.2" stroke="#a0a0a0" stroke-width="0.8"/><path d="M472 628.2H536.5C532 633 524 638.4 515 638.6H493C484 638.4 476 633 472 628.2Z" fill="url(#tip)"/></svg>
<div class="b" style="left:935px;top:93px;width:16px;height:618px;background:#4d4d4d;"></div>
<div class="b" style="left:72px;top:711px;width:880px;height:17px;background:#4d4d4d;"></div>
<div class="b" style="left:72px;top:711px;width:49px;height:15px;background:#484848;"></div>
<div class="b" style="left:121px;top:711px;width:183px;height:15px;background:#535353;"></div>
<div class="b" style="left:935px;top:711px;width:16px;height:15px;background:#535353;"></div>
<div class="b" style="left:72px;top:726px;width:880px;height:2px;background:#3f3f3f;"></div>
<div class="t " style="left:85px;top:710.5px;font-size:11px;color:#e2e2e2;">25%</div>
<div class="t " style="left:159.5px;top:710.5px;font-size:11px;color:#e2e2e2;"><span class="c c12">文档</span></div>
<div class="t " style="left:183.5px;top:710.5px;font-size:11px;color:#e2e2e2;">:10.5M/7.22M</div>
<svg class="i" style="left:294px;top:713px;" width="6" height="11" viewBox="0 0 6 11"><path d="M1 0.5L4.6 5.5L1 10.5" fill="none" stroke="#d0d0d0" stroke-width="1.1"/></svg>
<!-- tool bar -->
<div class="b" style="left:0px;top:65px;width:70px;height:12px;background:#454545;"></div>
<div class="b" style="left:0px;top:77px;width:70px;height:651px;background:#535353;"></div>
<div class="b" style="left:66px;top:65px;width:3px;height:663px;background:#4b4b4b;"></div>
<div class="b" style="left:69px;top:65px;width:1px;height:663px;background:#505050;"></div>
<div class="b" style="left:70px;top:65px;width:2px;height:663px;background:#3a3a3a;"></div>
<svg class="i" style="left:5px;top:68.5px;" width="8" height="5" viewBox="0 0 8 5"><path d="M3.2 0.2L0.9 2.5L3.2 4.8M7 0.2L4.7 2.5L7 4.8" fill="none" stroke="#d4d4d4" stroke-width="1.5"/></svg>
<svg class="i" style="left:25px;top:80.2px;" width="20" height="4" viewBox="0 0 20 4"><rect x="0.0" y="0" width="1" height="4" fill="#454545"/><rect x="2.45" y="0" width="1" height="4" fill="#454545"/><rect x="4.9" y="0" width="1" height="4" fill="#454545"/><rect x="7.3500000000000005" y="0" width="1" height="4" fill="#454545"/><rect x="9.8" y="0" width="1" height="4" fill="#454545"/><rect x="12.25" y="0" width="1" height="4" fill="#454545"/><rect x="14.700000000000001" y="0" width="1" height="4" fill="#454545"/><rect x="17.150000000000002" y="0" width="1" height="4" fill="#454545"/></svg>
<div class="b" style="left:3px;top:94.5px;width:30.5px;height:23px;background:#383838;border-radius:2px"></div>
<svg class="i" style="left:28.2px;top:112px;" width="3" height="3" viewBox="0 0 3 3"><path d="M2.9 0V2.9H0Z" fill="#a4a4a4"/></svg>
<svg class="i" style="left:61.4px;top:112px;" width="3" height="3" viewBox="0 0 3 3"><path d="M2.9 0V2.9H0Z" fill="#a4a4a4"/></svg>
<svg class="i" style="left:28.2px;top:138px;" width="3" height="3" viewBox="0 0 3 3"><path d="M2.9 0V2.9H0Z" fill="#a4a4a4"/></svg>
<svg class="i" style="left:61.4px;top:138px;" width="3" height="3" viewBox="0 0 3 3"><path d="M2.9 0V2.9H0Z" fill="#a4a4a4"/></svg>
<svg class="i" style="left:28.2px;top:164px;" width="3" height="3" viewBox="0 0 3 3"><path d="M2.9 0V2.9H0Z" fill="#a4a4a4"/></svg>
<svg class="i" style="left:28.2px;top:190px;" width="3" height="3" viewBox="0 0 3 3"><path d="M2.9 0V2.9H0Z" fill="#a4a4a4"/></svg>
<svg class="i" style="left:61.4px;top:190px;" width="3" height="3" viewBox="0 0 3 3"><path d="M2.9 0V2.9H0Z" fill="#a4a4a4"/></svg>
<svg class="i" style="left:28.2px;top:216px;" width="3" height="3" viewBox="0 0 3 3"><path d="M2.9 0V2.9H0Z" fill="#a4a4a4"/></svg>
<svg class="i" style="left:61.4px;top:216px;" width="3" height="3" viewBox="0 0 3 3"><path d="M2.9 0V2.9H0Z" fill="#a4a4a4"/></svg>
<svg class="i" style="left:28.2px;top:242px;" width="3" height="3" viewBox="0 0 3 3"><path d="M2.9 0V2.9H0Z" fill="#a4a4a4"/></svg>
<svg class="i" style="left:61.4px;top:242px;" width="3" height="3" viewBox="0 0 3 3"><path d="M2.9 0V2.9H0Z" fill="#a4a4a4"/></svg>
<svg class="i" style="left:28.2px;top:268px;" width="3" height="3" viewBox="0 0 3 3"><path d="M2.9 0V2.9H0Z" fill="#a4a4a4"/></svg>
<svg class="i" style="left:61.4px;top:268px;" width="3" height="3" viewBox="0 0 3 3"><path d="M2.9 0V2.9H0Z" fill="#a4a4a4"/></svg>
<svg class="i" style="left:28.2px;top:294px;" width="3" height="3" viewBox="0 0 3 3"><path d="M2.9 0V2.9H0Z" fill="#a4a4a4"/></svg>
<svg class="i" style="left:61.4px;top:294px;" width="3" height="3" viewBox="0 0 3 3"><path d="M2.9 0V2.9H0Z" fill="#a4a4a4"/></svg>
<svg class="i" style="left:28.2px;top:320px;" width="3" height="3" viewBox="0 0 3 3"><path d="M2.9 0V2.9H0Z" fill="#a4a4a4"/></svg>
<svg class="i" style="left:61.4px;top:320px;" width="3" height="3" viewBox="0 0 3 3"><path d="M2.9 0V2.9H0Z" fill="#a4a4a4"/></svg>
<svg class="i" style="left:28.2px;top:346px;" width="3" height="3" viewBox="0 0 3 3"><path d="M2.9 0V2.9H0Z" fill="#a4a4a4"/></svg>
<svg class="i" style="left:61.4px;top:346px;" width="3" height="3" viewBox="0 0 3 3"><path d="M2.9 0V2.9H0Z" fill="#a4a4a4"/></svg>
<svg class="i" style="left:61.4px;top:372px;" width="3" height="3" viewBox="0 0 3 3"><path d="M2.9 0V2.9H0Z" fill="#a4a4a4"/></svg>
<svg class="i" style="left:61.4px;top:452px;" width="3" height="3" viewBox="0 0 3 3"><path d="M2.9 0V2.9H0Z" fill="#a4a4a4"/></svg>
<svg class="i" style="left:11px;top:99px;" width="15.2" height="15.2" viewBox="0 0 15 15"><path d="M7.5 0L4.6 3.2H6.8V6.8H3.2V4.6L0 7.5L3.2 10.4V8.2H6.8V11.8H4.6L7.5 15L10.4 11.8H8.2V8.2H11.8V10.4L15 7.5L11.8 4.6V6.8H8.2V3.2H10.4Z" fill="#ececec"/></svg>
<svg class="i" style="left:43.7px;top:99.2px;" width="16.6" height="12.8" viewBox="0 0 16.6 12.8"><path d="M0.7 0.7H15.9M0.7 12.1H15.9" fill="none" stroke="#dedede" stroke-width="1.4" stroke-dasharray="3.1 1.97" stroke-dashoffset="1.55"/><path d="M0.7 0.7V12.1M15.9 0.7V12.1" fill="none" stroke="#dedede" stroke-width="1.4" stroke-dasharray="3.5 2.2" stroke-dashoffset="1.75"/></svg>
<svg class="i" style="left:11.5px;top:124.8px;" width="17" height="16" viewBox="0 0 17 16"><ellipse cx="8.8" cy="6" rx="7.6" ry="5.1" transform="rotate(-14 8.8 6)" fill="none" stroke="#dedede" stroke-width="1.3"/><circle cx="3.4" cy="10.6" r="1.7" fill="none" stroke="#dedede" stroke-width="1.1"/><path d="M4.4 12C5.4 13 5 14.6 4.2 15.6" fill="none" stroke="#dedede" stroke-width="1.1"/></svg>
<svg class="i" style="left:44px;top:123.6px;" width="18.5" height="17.5" viewBox="0 0 18.5 17.5"><path d="M2.2 15.4L11.8 5.8" stroke="#dedede" stroke-width="3.6" stroke-linecap="round" fill="none"/><path d="M9.6 8L11.8 5.8" stroke="#535353" stroke-width="1.4" stroke-linecap="round" fill="none"/><path d="M7.6 0.4V4.4M5.6 2.4H9.6M15.4 0.2V4.6M13.2 2.4H17.6M16.4 6.6V10.2M14.6 8.4H18.2" fill="none" stroke="#dedede" stroke-width="1.1"/></svg>
<svg class="i" style="left:9.2px;top:149.2px;" width="18.6" height="16.6" viewBox="0 0 18.6 16.6"><path d="M5.4 0V12.2H14.6M0 3.8H2.6M5.4 3.8H13.4V16.4" fill="none" stroke="#dedede" stroke-width="2"/><path d="M15.6 12.2H18.2" fill="none" stroke="#dedede" stroke-width="2" stroke-dasharray="1.3 1"/></svg>
<svg class="i" style="left:44.3px;top:151.2px;" width="17.4" height="13.4" viewBox="0 0 17.4 13.4"><rect x="1.2" y="1.2" width="15" height="11" fill="none" stroke="#dedede" stroke-width="1.3"/><path d="M1.2 1.2L16.2 12.2M16.2 1.2L1.2 12.2" fill="none" stroke="#dedede" stroke-width="1.2"/><path d="M0 0h2.4v2.4h-2.4zM15 0h2.4v2.4h-2.4zM0 11h2.4v2.4h-2.4zM15 11h2.4v2.4h-2.4z" fill="#dedede"/></svg>
<svg class="i" style="left:10.5px;top:176px;" width="16.8" height="16.2" viewBox="0 0 16.8 16.2"><path d="M1.4 15L0.9 13.2L8.4 5.7L10.6 7.9L3.1 15.4Z" fill="none" stroke="#dedede" stroke-width="1.1"/><path d="M6.4 3.4L12.8 9.8" stroke="#dedede" stroke-width="2.4" fill="none"/><path d="M10.4 5.8L14.2 2" stroke="#dedede" stroke-width="4" stroke-linecap="round" fill="none"/></svg>
<svg class="i" style="left:40.8px;top:175px;" width="21" height="15.6" viewBox="0 0 21 15.6"><path d="M4.4 0V8.6M0 4.3H8.8" fill="none" stroke="#dedede" stroke-width="1.3"/><path d="M7 11.2C9.6 6.4 18 6.4 20.8 11.2C18 15.8 9.6 15.8 7 11.2Z" fill="#dedede"/><circle cx="13.8" cy="10.8" r="2.7" fill="#4a4a4a"/><circle cx="14.6" cy="10" r="0.9" fill="#dedede"/></svg>
<svg class="i" style="left:10.7px;top:202px;" width="16" height="16.2" viewBox="0 0 16 16.2"><path d="M15.7 0.2C12.8 2.6 9.4 6.4 7.5 9.2L9.5 11.2C12.2 8.6 14.8 4.2 15.7 0.2Z" fill="#dedede"/><path d="M6.6 10C4.2 9.6 2.6 11.4 2.4 13.2C2.2 14.4 1.3 15.2 0.3 15.6C3.6 16.5 7.8 15.2 8.8 12.2Z" fill="#dedede"/></svg>
<svg class="i" style="left:45.4px;top:202.6px;" width="14" height="15.6" viewBox="0 0 14 15.6"><circle cx="7" cy="3.4" r="3.3" fill="#dedede"/><path d="M5.6 5.6L4.8 9.6H1V12.4H13V9.6H9.2L8.4 5.6Z" fill="#dedede"/><path d="M1 14.6H13" fill="none" stroke="#dedede" stroke-width="1.3"/></svg>
<svg class="i" style="left:9.4px;top:228.4px;" width="18.6" height="16.2" viewBox="0 0 18.6 16.2"><g transform="translate(4.2 1.2) scale(0.9)"><path d="M15.7 0.2C12.8 2.6 9.4 6.4 7.5 9.2L9.5 11.2C12.2 8.6 14.8 4.2 15.7 0.2Z" fill="#dedede"/><path d="M6.6 10C4.2 9.6 2.6 11.4 2.4 13.2C2.2 14.4 1.3 15.2 0.3 15.6C3.6 16.5 7.8 15.2 8.8 12.2Z" fill="#dedede"/></g><path d="M0.4 4.4L5 1V3C8 3 9.8 4 10.4 5.6C8.8 5 7 5 5 5.2V7.4Z" fill="#dedede"/><path d="M13.4 10.2v1M15 8.6v1M15 12v1M13.4 13.8v1M16.6 10.4v1" fill="none" stroke="#dedede" stroke-width="1"/></svg>
<svg class="i" style="left:45px;top:229.6px;" width="16" height="14" viewBox="0 0 16 14"><path d="M9 0.5L15.4 5L11 9.9L4.4 5.6Z" fill="#dedede"/><path d="M4.4 5.6L0.9 9.6L4.6 12.8H8.4L11 9.9" fill="none" stroke="#dedede" stroke-width="1.2"/><path d="M8 13.2H15.4" fill="none" stroke="#dedede" stroke-width="1.2"/></svg>
<svg class="i" style="left:10.7px;top:255px;" width="16.8" height="13.2" viewBox="0 0 16.8 13.2"><defs><linearGradient id="tg"><stop offset="0" stop-color="#1c1c1c"/><stop offset="1" stop-color="#f2f2f2"/></linearGradient></defs><rect x="0.6" y="0.6" width="15.6" height="12" fill="url(#tg)" stroke="#e6e6e6" stroke-width="1.2"/></svg>
<svg class="i" style="left:46.6px;top:254px;" width="11" height="15" viewBox="0 0 11 15"><path d="M5.5 0C5.5 0 10.8 6.6 10.8 9.6A5.3 5.3 0 0 1 0.2 9.6C0.2 6.6 5.5 0 5.5 0Z" fill="#dedede"/></svg>
<svg class="i" style="left:10.8px;top:280.3px;" width="16" height="16" viewBox="0 0 16 16"><circle cx="10.2" cy="5.8" r="5.3" fill="#dedede"/><path d="M6.6 9.6L0.8 15.4" stroke="#dedede" stroke-width="1.9" fill="none"/></svg>
<svg class="i" style="left:44.6px;top:280.8px;" width="16" height="15.4" viewBox="0 0 16 15.4"><path d="M0.7 14.8L2.4 6.4L8.2 3.2L12.4 7.4L9.2 13.2Z" fill="none" stroke="#dedede" stroke-width="1.2"/><path d="M0.9 14.6L6 9.4" fill="none" stroke="#dedede" stroke-width="1"/><circle cx="6.8" cy="8.6" r="1.2" fill="#dedede"/><path d="M9 2L11.4 -0.2L15.8 4.2L13.4 6.6Z" fill="#dedede"/></svg>
<svg class="i" style="left:14px;top:307.6px;" width="12.6" height="13.4" viewBox="0 0 12.6 13.4"><path d="M0 0H12.5V3.6H11.5C11.3 2.2 10.6 1.5 9.2 1.5H7.5V11C7.5 12 7.9 12.3 9.3 12.4V13.3H3.2V12.4C4.6 12.3 5 12 5 11V1.5H3.3C1.9 1.5 1.2 2.2 1 3.6H0Z" fill="#dedede"/></svg>
<svg class="i" style="left:47.8px;top:306px;" width="10.6" height="16.6" viewBox="0 0 10.6 16.6"><path d="M0.6 0.8V13L3.8 10.2L6.2 15.8L8.6 14.8L6.2 9.4H10.2Z" fill="#0c0c0c" stroke="#c8c8c8" stroke-width="1"/></svg>
<svg class="i" style="left:10.7px;top:333px;" width="16.6" height="12.8" viewBox="0 0 16.6 12.8"><rect x="0.6" y="0.6" width="15.4" height="11.6" fill="#787878" stroke="#e2e2e2" stroke-width="1.2"/></svg>
<svg class="i" style="left:43.8px;top:331.5px;" width="16.6" height="16.6" viewBox="0 0 16.6 16.6"><path d="M4.6 9V2.6A1 1 0 0 1 6.6 2.6V7.5H7.2V1A1 1 0 0 1 9.2 1V7.5H9.8V1.8A1 1 0 0 1 11.8 1.8V8.2L12.6 8.4L14.6 4.4A1 1 0 0 1 16.4 5.2L14.8 10.6C14.2 14.4 12 16.6 9 16.6C6.2 16.6 4.8 15.4 3.4 13.2L0.3 8.2C-0.2 7.2 1.2 6.4 2 7.4L4.6 10.6Z" fill="#dedede"/></svg>
<svg class="i" style="left:10.8px;top:358.3px;" width="16" height="15.4" viewBox="0 0 16 15.4"><circle cx="6" cy="6" r="5.1" fill="none" stroke="#dedede" stroke-width="1.5"/><path d="M9.8 9.8L15 14.6" stroke="#dedede" stroke-width="2.3" fill="none"/><path d="M3 5.4A3.2 3.2 0 0 1 6.6 2.8" fill="none" stroke="#dedede" stroke-width="0.9"/></svg>
<svg class="i" style="left:43.6px;top:363.6px;" width="17" height="4.6" viewBox="0 0 17 4.6"><circle cx="2.2" cy="2.2" r="1.95" fill="#dedede"/><circle cx="8.2" cy="2.2" r="1.95" fill="#dedede"/><circle cx="14.4" cy="2.2" r="1.95" fill="#dedede"/></svg>
<div class="b" style="left:31.6px;top:403px;width:24.6px;height:24.2px;background:#14b3f3;border:1px solid #f6f6f6"></div>
<div class="b" style="left:16.6px;top:386.6px;width:25px;height:24.6px;background:#eaeca3;border:1px solid #2c2c2c"></div>
<svg class="i" style="left:48px;top:386.6px;" width="10.4" height="9.8" viewBox="0 0 10.4 9.8"><path d="M0 2.8L3 0V2H6.8Q8.2 2 8.2 3.4V6.2H10L7.4 9.6L4.8 6.2H6.6V3.6H3V5.6Z" fill="#dedede"/></svg>
<div class="b" style="left:19.4px;top:422.4px;width:6.2px;height:6.2px;background:#e6e6e6;"></div>
<div class="b" style="left:16.2px;top:419.3px;width:6.4px;height:6.4px;background:#080808;border:0.6px solid #bdbdbd"></div>
<svg class="i" style="left:10.3px;top:441.4px;" width="17" height="12.4" viewBox="0 0 17 12.4"><rect x="0.6" y="0.6" width="15.8" height="11.2" fill="none" stroke="#dedede" stroke-width="1.2"/><circle cx="8.5" cy="6.2" r="3.5" fill="none" stroke="#dedede" stroke-width="1.1" stroke-dasharray="1 1.2"/></svg>
<svg class="i" style="left:43.4px;top:441.8px;" width="17" height="12.4" viewBox="0 0 17 12.4"><rect x="5.2" y="0.6" width="11.2" height="7.8" fill="none" stroke="#dedede" stroke-width="1.2"/><rect x="0.6" y="3.8" width="11.2" height="7.8" fill="#535353" stroke="#dedede" stroke-width="1.2"/></svg>
<!-- right dock -->
<div class="b" style="left:951px;top:65px;width:3px;height:663px;background:#3b3b3b;"></div>
<div class="b" style="left:952px;top:65px;width:1px;height:663px;background:#4a4a4a;"></div>
<div class="b" style="left:954px;top:65px;width:38px;height:12px;background:#454545;"></div>
<div class="b" style="left:954px;top:77px;width:38px;height:651px;background:#535353;"></div>
<div class="b" style="left:992px;top:65px;width:2px;height:663px;background:#3b3b3b;"></div>
<svg class="i" style="left:978px;top:68.5px;" width="8" height="5" viewBox="0 0 8 5"><path d="M3.2 0.2L0.9 2.5L3.2 4.8M7 0.2L4.7 2.5L7 4.8" fill="none" stroke="#d4d4d4" stroke-width="1.5"/></svg>
<svg class="i" style="left:962.5px;top:80px;" width="21" height="4" viewBox="0 0 21 4"><rect x="0.0" y="0" width="1" height="4" fill="#454545"/><rect x="2.45" y="0" width="1" height="4" fill="#454545"/><rect x="4.9" y="0" width="1" height="4" fill="#454545"/><rect x="7.3500000000000005" y="0" width="1" height="4" fill="#454545"/><rect x="9.8" y="0" width="1" height="4" fill="#454545"/><rect x="12.25" y="0" width="1" height="4" fill="#454545"/><rect x="14.700000000000001" y="0" width="1" height="4" fill="#454545"/><rect x="17.150000000000002" y="0" width="1" height="4" fill="#454545"/><rect x="19.6" y="0" width="1" height="4" fill="#454545"/></svg>
<div class="b" style="left:954px;top:117px;width:38px;height:1px;background:#3f3f3f;"></div>
<svg class="i" style="left:962.5px;top:121px;" width="21" height="4" viewBox="0 0 21 4"><rect x="0.0" y="0" width="1" height="4" fill="#454545"/><rect x="2.45" y="0" width="1" height="4" fill="#454545"/><rect x="4.9" y="0" width="1" height="4" fill="#454545"/><rect x="7.3500000000000005" y="0" width="1" height="4" fill="#454545"/><rect x="9.8" y="0" width="1" height="4" fill="#454545"/><rect x="12.25" y="0" width="1" height="4" fill="#454545"/><rect x="14.700000000000001" y="0" width="1" height="4" fill="#454545"/><rect x="17.150000000000002" y="0" width="1" height="4" fill="#454545"/><rect x="19.6" y="0" width="1" height="4" fill="#454545"/></svg>
<div class="b" style="left:954px;top:158px;width:38px;height:1px;background:#3f3f3f;"></div>
<svg class="i" style="left:966px;top:92px;" width="18" height="18" viewBox="0 0 18 18"><rect x="1.3" y="0.8" width="3.6" height="3.6" fill="none" stroke="#d4d4d4" stroke-width="1"/><rect x="1.3" y="6.6" width="3.6" height="3.6" fill="none" stroke="#d4d4d4" stroke-width="1"/><rect x="0.8" y="12.2" width="4.6" height="4.6" fill="#d4d4d4"/><path d="M10.4 15.2C15.6 12.6 16.8 8.4 14 4.6" fill="none" stroke="#d4d4d4" stroke-width="2.4"/><path d="M8.8 1.8L16.2 2.2L12 8.2Z" fill="#d4d4d4"/></svg>
<svg class="i" style="left:965px;top:132px;" width="18" height="18" viewBox="0 0 18 18"><path d="M5 1L9.2 3V8.4L5 10.6L0.8 8.4V3Z" fill="none" stroke="#d4d4d4" stroke-width="1.2"/><path d="M0.8 3L5 5.2L9.2 3M5 5.2V10.6" fill="none" stroke="#d4d4d4" stroke-width="1"/><rect x="11.5" y="1" width="4" height="3.8" fill="#d4d4d4"/><rect x="11.5" y="6.4" width="4" height="3.8" fill="#d4d4d4"/><rect x="0.6" y="12.6" width="15.2" height="4" fill="#d4d4d4"/><path d="M12 13.8H14.6L13.3 15.6Z" fill="#535353"/></svg>
<div class="b" style="left:994px;top:65px;width:371px;height:12px;background:#464646;"></div>
<svg class="i" style="left:1350.5px;top:68.5px;" width="8" height="5" viewBox="0 0 8 5"><path d="M0.8 0.2L3.1 2.5L0.8 4.8M4.6 0.2L6.9 2.5L4.6 4.8" fill="none" stroke="#d4d4d4" stroke-width="1.5"/></svg>
<!-- color panel -->
<div class="b" style="left:994px;top:77px;width:371px;height:28px;background:#424242;"></div>
<div class="b" style="left:994px;top:77px;width:43px;height:28px;background:#535353;"></div>
<div class="b" style="left:1037px;top:77px;width:44px;height:27px;background:#4a4a4a;"></div>
<div class="b" style="left:1081px;top:77px;width:1px;height:27px;background:#383838;"></div>
<div class="t " style="left:1003.5px;top:82.5px;font-size:11px;color:#f2f2f2;"><span class="c c12">颜色</span></div>
<div class="t " style="left:1046.5px;top:82.5px;font-size:11px;color:#b0b0b0;"><span class="c c12">色板</span></div>
<svg class="i" style="left:1348px;top:87px;" width="10" height="8" viewBox="0 0 10 8"><rect x="0" y="0.0" width="10" height="1" fill="#d0d0d0"/><rect x="0" y="2.33" width="10" height="1" fill="#d0d0d0"/><rect x="0" y="4.66" width="10" height="1" fill="#d0d0d0"/><rect x="0" y="6.99" width="10" height="1" fill="#d0d0d0"/></svg>
<div class="b" style="left:994px;top:105px;width:371px;height:173px;background:#535353;"></div>
<div class="b" style="left:994px;top:278px;width:371px;height:4px;background:#3b3b3b;"></div>
<div class="b" style="left:1013.5px;top:125.5px;width:19px;height:19px;background:#1cb4f1;border:1px solid #f4f4f4"></div>
<div class="b" style="left:1002.5px;top:114.5px;width:21px;height:21px;background:#eaeca3;border:2px solid #ffffff;outline:1px solid #85857a;outline-offset:-1px"></div>
<div class="b" style="left:1039px;top:112px;width:273px;height:146px;background:linear-gradient(to top,#000,rgba(0,0,0,0)),linear-gradient(to right,#fff,#f2ff00);"></div>
<svg class="i" style="left:1118px;top:116.5px;" width="12" height="12" viewBox="0 0 12 12"><circle cx="6" cy="6" r="5" fill="none" stroke="#0c0c0c" stroke-width="1.1"/></svg>
<div class="b" style="left:1328px;top:112px;width:20px;height:146px;background:linear-gradient(to bottom,#f00 0%,#f0f 16.7%,#00f 33.3%,#0ff 50%,#0f0 66.7%,#ff0 83.3%,#f00 100%);"></div>
<svg class="i" style="left:1318px;top:226px;" width="8" height="10" viewBox="0 0 8 10"><path d="M1.8 0.8H3.6L7.2 5L3.6 9.2H1.8Q0.6 9.2 0.6 8V2Q0.6 0.8 1.8 0.8Z" fill="#e4e4e4"/></svg>
<!-- libraries panel -->
<div class="b" style="left:994px;top:282px;width:371px;height:28px;background:#424242;"></div>
<div class="b" style="left:994px;top:282px;width:43px;height:27px;background:#4a4a4a;"></div>
<div class="b" style="left:1036px;top:282px;width:1px;height:27px;background:#383838;"></div>
<div class="b" style="left:1037px;top:282px;width:39px;height:28px;background:#535353;"></div>
<div class="b" style="left:1076px;top:282px;width:44px;height:27px;background:#4a4a4a;"></div>
<div class="b" style="left:1076px;top:282px;width:1px;height:27px;background:#383838;"></div>
<div class="b" style="left:1120px;top:282px;width:1px;height:27px;background:#383838;"></div>
<div class="t " style="left:1003.5px;top:287.5px;font-size:11px;color:#b0b0b0;"><span class="c c12">学习</span></div>
<div class="t " style="left:1046.5px;top:287.5px;font-size:11px;color:#f2f2f2;"><span class="c c12">库</span></div>
<div class="t " style="left:1085.5px;top:287.5px;font-size:11px;color:#b0b0b0;"><span class="c c12">调整</span></div>
<svg class="i" style="left:1348px;top:292px;" width="10" height="8" viewBox="0 0 10 8"><rect x="0" y="0.0" width="10" height="1" fill="#d0d0d0"/><rect x="0" y="2.33" width="10" height="1" fill="#d0d0d0"/><rect x="0" y="4.66" width="10" height="1" fill="#d0d0d0"/><rect x="0" y="6.99" width="10" height="1" fill="#d0d0d0"/></svg>
<div class="b" style="left:994px;top:310px;width:371px;height:63px;background:#515151;"></div>
<div class="b" style="left:994px;top:372px;width:371px;height:1px;background:#474747;"></div>
<div class="b" style="left:994px;top:373px;width:371px;height:80px;background:#4e4e4e;"></div>
<div class="b" style="left:994px;top:453px;width:371px;height:23px;background:#535353;"></div>
<div class="b" style="left:1002px;top:318px;width:296px;height:18px;background:#4c4c4c;border:1px solid #5f5f5f;border-radius:2px"></div>
<svg class="i" style="left:1287px;top:325.5px;" width="8" height="5" viewBox="0 0 8 5"><path d="M0.5 0.6L4 3.8L7.5 0.6" fill="none" stroke="#8c8c8c" stroke-width="1.2"/></svg>
<div class="b" style="left:1308px;top:317.5px;width:21px;height:21px;background:#2f2f2f;border-radius:2px"></div>
<svg class="i" style="left:1313px;top:322.2px;" width="11" height="11" viewBox="0 0 11 11"><rect x="0" y="0" width="4.8" height="4.8" fill="#f0f0f0"/><rect x="0" y="6.2" width="4.8" height="4.8" fill="#f0f0f0"/><rect x="6.2" y="0" width="4.8" height="4.8" fill="#f0f0f0"/><rect x="6.2" y="6.2" width="4.8" height="4.8" fill="#f0f0f0"/></svg>
<svg class="i" style="left:1337.5px;top:322.2px;" width="12" height="12" viewBox="0 0 12 12"><rect x="0" y="0.0" width="12" height="2" fill="#e8e8e8"/><rect x="0" y="3.1" width="12" height="2" fill="#e8e8e8"/><rect x="0" y="6.2" width="12" height="2" fill="#e8e8e8"/><rect x="0" y="9.3" width="12" height="2" fill="#e8e8e8"/></svg>
<svg class="i" style="left:1001.5px;top:351px;" width="11" height="11" viewBox="0 0 11 11"><circle cx="6.6" cy="4.2" r="3.3" fill="none" stroke="#d4d4d4" stroke-width="1.6"/><path d="M4.2 6.6L0.8 10" stroke="#d4d4d4" stroke-width="2"/></svg>
<div class="t it" style="left:1018px;top:348.5px;font-size:11px;color:#747474;font-style:italic"><span class="c c12">搜索</span></div>
<div class="t tj" style="left:1045.5px;top:348.5px;font-size:11px;color:#747474;width:62.5px;font-style:italic">Adobe Stock</div>
<svg class="i" style="left:1344.5px;top:354.5px;" width="8" height="5" viewBox="0 0 8 5"><path d="M0.5 0.6L4 3.8L7.5 0.6" fill="none" stroke="#8c8c8c" stroke-width="1.1"/></svg>
<div class="b" style="left:1002px;top:366px;width:353px;height:1px;background:#5e5e5e;"></div>
<svg class="i" style="left:1154.5px;top:380.5px;" width="50" height="38" viewBox="0 0 50 38"><circle cx="15.2" cy="19.8" r="14.6" fill="#7b7b7b"/><circle cx="34.5" cy="13.5" r="13.4" fill="#7b7b7b"/><path d="M15.2 19.8H40V34.4H15.2Z" fill="#7b7b7b"/><g fill="none" stroke="#4e4e4e" stroke-width="2.3" stroke-linecap="round"><path d="M21.6 12.1A10 10 0 1 0 20.2 28.5"/><path d="M26 10.2A9 9 0 1 1 42.3 17.8"/><path d="M15.6 19.6C18 19 20 20.4 21.6 22L29.5 29.8"/><path d="M22.4 12.4C24.6 13.4 26 15 28.6 18"/></g><path d="M31.5 22L46.5 36.5M46.5 22L31.5 36.5" stroke="#4e4e4e" stroke-width="6.8999999999999995" fill="none"/><path d="M31.8 22.3L46.2 36.2M46.2 22.3L31.8 36.2" stroke="#7b7b7b" stroke-width="3.565" fill="none"/></svg>
<div class="t " style="left:1084px;top:424.5px;font-size:11px;color:#cdcdcd;"><span class="c c12">要使用</span></div>
<div class="t tj" style="left:1123.3px;top:424.5px;font-size:11.4px;color:#cdcdcd;width:124.5px;">Creative Cloud Libraries</div>
<div class="t " style="left:1248.5px;top:424.5px;font-size:11px;color:#cdcdcd;"><span class="c c12">，您</span></div>
<div class="t " style="left:1094.5px;top:439.5px;font-size:11px;color:#cdcdcd;"><span class="c c12">需要登录</span></div>
<div class="t tj" style="left:1146.3px;top:439.5px;font-size:11.4px;color:#cdcdcd;width:77px;">Creative Cloud</div>
<div class="t " style="left:1225.5px;top:439.5px;font-size:11px;color:#cdcdcd;"><span class="c c12">帐户。</span></div>
<div class="t " style="left:1275px;top:457.5px;font-size:11px;color:#ececec;">-- KB</div>
<svg class="i" style="left:1305px;top:458.5px;" width="16" height="13" viewBox="0 0 50 39"><circle cx="15.2" cy="19.8" r="14.6" fill="#dcdcdc"/><circle cx="34.5" cy="13.5" r="13.4" fill="#dcdcdc"/><path d="M15.2 19.8H40V34.4H15.2Z" fill="#dcdcdc"/><g fill="none" stroke="#535353" stroke-width="3.4" stroke-linecap="round"><path d="M21.6 12.1A10 10 0 1 0 20.2 28.5"/><path d="M26 10.2A9 9 0 1 1 42.3 17.8"/><path d="M15.6 19.6C18 19 20 20.4 21.6 22L29.5 29.8"/><path d="M22.4 12.4C24.6 13.4 26 15 28.6 18"/></g><path d="M31.5 22L46.5 36.5M46.5 22L31.5 36.5" stroke="#535353" stroke-width="10.2" fill="none"/><path d="M31.8 22.3L46.2 36.2M46.2 22.3L31.8 36.2" stroke="#dcdcdc" stroke-width="5.27" fill="none"/></svg>
<svg class="i" style="left:1331px;top:459.5px;" width="11" height="12.5" viewBox="0 0 11 12.5"><path d="M0.3 2.4H10.7" stroke="#7c7c7c" stroke-width="1.2"/><path d="M3.6 1.6V0.5H7.4V1.6" fill="none" stroke="#7c7c7c" stroke-width="1"/><path d="M1.5 3.6H9.5V12H1.5Z" fill="none" stroke="#7c7c7c" stroke-width="1.1"/><path d="M3.7 5V10.6M5.5 5V10.6M7.3 5V10.6" stroke="#7c7c7c" stroke-width="0.9"/></svg>
<!-- layers panel -->
<div class="b" style="left:994px;top:476px;width:371px;height:3px;background:#3b3b3b;"></div>
<div class="b" style="left:994px;top:479px;width:371px;height:28px;background:#424242;"></div>
<div class="b" style="left:994px;top:479px;width:45px;height:28px;background:#535353;"></div>
<div class="b" style="left:1039px;top:479px;width:44px;height:27px;background:#4a4a4a;"></div>
<div class="b" style="left:1083px;top:479px;width:1px;height:27px;background:#383838;"></div>
<div class="b" style="left:1084px;top:479px;width:43px;height:27px;background:#4a4a4a;"></div>
<div class="b" style="left:1127px;top:479px;width:1px;height:27px;background:#383838;"></div>
<div class="t " style="left:1003.5px;top:484.5px;font-size:11px;color:#f2f2f2;"><span class="c c12">图层</span></div>
<div class="t " style="left:1047.5px;top:484.5px;font-size:11px;color:#b0b0b0;"><span class="c c12">通道</span></div>
<div class="t " style="left:1092.5px;top:484.5px;font-size:11px;color:#b0b0b0;"><span class="c c12">路径</span></div>
<svg class="i" style="left:1348px;top:489px;" width="10" height="8" viewBox="0 0 10 8"><rect x="0" y="0.0" width="10" height="1" fill="#d0d0d0"/><rect x="0" y="2.33" width="10" height="1" fill="#d0d0d0"/><rect x="0" y="4.66" width="10" height="1" fill="#d0d0d0"/><rect x="0" y="6.99" width="10" height="1" fill="#d0d0d0"/></svg>
<div class="b" style="left:994px;top:507px;width:371px;height:221px;background:#535353;"></div>
<div class="b" style="left:994px;top:539px;width:371px;height:1px;background:#474747;"></div>
<div class="b" style="left:994px;top:568px;width:371px;height:1px;background:#474747;"></div>
<div class="b" style="left:994px;top:596px;width:371px;height:106px;background:#4e4e4e;"></div>
<div class="b" style="left:994px;top:702px;width:371px;height:1px;background:#444;"></div>
<div class="b" style="left:994px;top:703px;width:371px;height:23px;background:#535353;"></div>
<div class="b" style="left:994px;top:726px;width:371px;height:2px;background:#3f3f3f;"></div>
<div class="b" style="left:998px;top:516px;width:85px;height:20.5px;background:#4c4c4c;border:1px solid #5a5a5a;border-radius:3px"></div>
<svg class="i" style="left:1006px;top:521.5px;" width="10" height="10.5" viewBox="0 0 10 10.5"><circle cx="4.1" cy="4.1" r="3.1" fill="none" stroke="#d6d6d6" stroke-width="1.7"/><path d="M6.4 6.6L9.4 9.8" stroke="#d6d6d6" stroke-width="2"/></svg>
<div class="t " style="left:1020.5px;top:519.3px;font-size:11px;color:#a6a6a6;"><span class="c c12">类型</span></div>
<svg class="i" style="left:1073.5px;top:524px;" width="7" height="5" viewBox="0 0 7 5"><path d="M0.5 0.6L3.5 3.6L6.5 0.6" fill="none" stroke="#6c6c6c" stroke-width="1.2"/></svg>
<svg class="i" style="left:1100px;top:520px;" width="13" height="11" viewBox="0 0 13 11"><rect x="0.6" y="0.6" width="11.4" height="9.3" fill="none" stroke="#bcbcbc" stroke-width="1.2"/><path d="M2 8.4L4.6 4.6L6.6 7L8.2 5.4L10.6 8.4Z" fill="#bcbcbc"/></svg>
<svg class="i" style="left:1124.5px;top:519.5px;" width="12" height="12" viewBox="0 0 12 12"><circle cx="6" cy="6" r="5" fill="none" stroke="#bcbcbc" stroke-width="1.3"/><path d="M2.5 9.6A5 5 0 0 1 9.6 2.5Z" fill="#bcbcbc"/></svg>
<div class="t " style="left:1149.5px;top:516.5px;font-size:13px;color:#bcbcbc;font-family:'Liberation Serif',serif;font-weight:bold">T</div>
<svg class="i" style="left:1172.5px;top:519.5px;" width="12" height="12" viewBox="0 0 12 12"><rect x="2" y="2" width="8" height="8" fill="none" stroke="#bcbcbc" stroke-width="1.2"/><rect x="0.2" y="0.2" width="3" height="3" fill="#bcbcbc"/><rect x="8.8" y="0.2" width="3" height="3" fill="#bcbcbc"/><rect x="0.2" y="8.8" width="3" height="3" fill="#bcbcbc"/><rect x="8.8" y="8.8" width="3" height="3" fill="#bcbcbc"/></svg>
<svg class="i" style="left:1197.5px;top:520px;" width="11" height="12.5" viewBox="0 0 11 12.5"><path d="M3.4 5V0.6H7.6L10.2 3.2V10.6H5.6" fill="none" stroke="#bcbcbc" stroke-width="1.2"/><path d="M7.4 0.8V3.6H10" fill="none" stroke="#bcbcbc" stroke-width="1"/><rect x="0.2" y="6" width="5" height="6" fill="#bcbcbc"/></svg>
<div class="b" style="left:1225px;top:521px;width:8.5px;height:12px;background:#474747;border-radius:4px"></div>
<div class="b" style="left:1225px;top:517.5px;width:8.5px;height:8.5px;background:#858585;border-radius:50%"></div>
<div class="b" style="left:998px;top:545px;width:116px;height:21.5px;background:#4c4c4c;border:1px solid #5a5a5a;border-radius:3px"></div>
<div class="t " style="left:1007px;top:549px;font-size:11px;color:#a6a6a6;"><span class="c c12">正常</span></div>
<svg class="i" style="left:1104px;top:554px;" width="7" height="5" viewBox="0 0 7 5"><path d="M0.5 0.6L3.5 3.6L6.5 0.6" fill="none" stroke="#6c6c6c" stroke-width="1.2"/></svg>
<div class="t " style="left:1121.5px;top:548px;font-size:11px;color:#a2a2a2;"><span class="c c12">不透明度</span>:</div>
<div class="b" style="left:1178.5px;top:544.5px;width:54px;height:17.5px;background:#4e4e4e;border:1px solid #5c5c5c"></div>
<div class="b" style="left:1217.5px;top:544.5px;width:1px;height:17.5px;background:#5c5c5c;"></div>
<svg class="i" style="left:1222px;top:551.25px;" width="7" height="5" viewBox="0 0 7 5"><path d="M0.5 0.6L3.5 3.6L6.5 0.6" fill="none" stroke="#707070" stroke-width="1.2"/></svg>
<div class="t " style="left:1183.5px;top:545.5px;font-size:11px;color:#787878;">100%</div>
<div class="t " style="left:1000.5px;top:576px;font-size:11px;color:#a2a2a2;"><span class="c c12">锁定</span>:</div>
<svg class="i" style="left:1037.5px;top:577px;" width="12" height="12" viewBox="0 0 12 12"><rect x="0.5" y="0.5" width="11" height="11" fill="none" stroke="#c4c4c4" stroke-width="1"/><rect x="0.5" y="0.5" width="2.75" height="2.75" fill="#c4c4c4"/><rect x="0.5" y="6.0" width="2.75" height="2.75" fill="#c4c4c4"/><rect x="3.25" y="3.25" width="2.75" height="2.75" fill="#c4c4c4"/><rect x="3.25" y="8.75" width="2.75" height="2.75" fill="#c4c4c4"/><rect x="6.0" y="0.5" width="2.75" height="2.75" fill="#c4c4c4"/><rect x="6.0" y="6.0" width="2.75" height="2.75" fill="#c4c4c4"/><rect x="8.75" y="3.25" width="2.75" height="2.75" fill="#c4c4c4"/><rect x="8.75" y="8.75" width="2.75" height="2.75" fill="#c4c4c4"/></svg>
<svg class="i" style="left:1058.5px;top:577px;" width="14" height="13" viewBox="0 0 14 13"><path d="M13.4 0.4C10 2.6 7 5.6 5.4 8L7 9.6C9.6 7.6 12 4.4 13.4 0.4Z" fill="#c4c4c4"/><path d="M4.6 8.8C2.8 8.8 2.4 10.4 0.4 12.2C2.6 12.8 5.8 12.4 6.4 10.4Z" fill="#c4c4c4"/></svg>
<svg class="i" style="left:1081.5px;top:576.5px;" width="12.5" height="12.5" viewBox="0 0 12.5 12.5"><path d="M6.25 0L3.9 2.7H5.7V5.7H2.7V3.9L0 6.25L2.7 8.6V6.8H5.7V9.8H3.9L6.25 12.5L8.6 9.8H6.8V6.8H9.8V8.6L12.5 6.25L9.8 3.9V5.7H6.8V2.7H8.6Z" fill="#c4c4c4"/></svg>
<svg class="i" style="left:1102.5px;top:577px;" width="15" height="13" viewBox="0 0 15 13"><path d="M3.5 0V10.5H14M0 3.5H10.5V13" fill="none" stroke="#c4c4c4" stroke-width="1.2"/><path d="M11.6 0.6L14 0.6L14 3Z" fill="#c4c4c4"/><path d="M9 5L13.4 0.8" stroke="#c4c4c4" stroke-width="1"/></svg>
<svg class="i" style="left:1126.5px;top:577px;" width="11" height="12.5" viewBox="0 0 11 12.5"><path d="M2.6 5.6V3.6A2.9 2.9 0 0 1 8.4 3.6V5.6" fill="none" stroke="#c4c4c4" stroke-width="1.5"/><rect x="0.4" y="5.4" width="10.2" height="6.8" fill="#c4c4c4"/><rect x="4.6" y="7.8" width="1.8" height="2.4" fill="#535353"/></svg>
<div class="t " style="left:1146px;top:576px;font-size:11px;color:#a2a2a2;"><span class="c c12">填充</span>:</div>
<div class="b" style="left:1178.5px;top:574.5px;width:54px;height:17.5px;background:#4e4e4e;border:1px solid #5c5c5c"></div>
<div class="b" style="left:1217.5px;top:574.5px;width:1px;height:17.5px;background:#5c5c5c;"></div>
<svg class="i" style="left:1222px;top:581.25px;" width="7" height="5" viewBox="0 0 7 5"><path d="M0.5 0.6L3.5 3.6L6.5 0.6" fill="none" stroke="#707070" stroke-width="1.2"/></svg>
<div class="t " style="left:1183.5px;top:575.5px;font-size:11px;color:#787878;">100%</div>
<div class="b" style="left:994px;top:600px;width:30px;height:40px;background:#585858;"></div>
<div class="b" style="left:1024px;top:600px;width:324px;height:40px;background:#6b6b6b;"></div>
<div class="b" style="left:1348px;top:596px;width:17px;height:106px;background:#535353;"></div>
<svg class="i" style="left:1002px;top:616.5px;" width="15" height="10" viewBox="0 0 15 10"><path d="M0.3 5C3 0.2 12 0.2 14.7 5C12 9.8 3 9.8 0.3 5Z" fill="#ededed"/><circle cx="7.5" cy="5" r="2.5" fill="#585858"/><circle cx="7.5" cy="5" r="1.1" fill="#ededed"/></svg>
<div class="b" style="left:1028px;top:604.5px;width:32px;height:31.5px;background:#fff;border:1px solid #161616"></div>
<svg class="i" style="left:1029px;top:605.5px;" width="30" height="29.5" viewBox="0 0 30 30"><path d="M15 3C9.5 3 6.6 7.2 6.6 11.4C6.6 15.6 10 18 10.6 23H19.4C20 18 23.4 15.6 23.4 11.4C23.4 7.2 20.5 3 15 3Z" fill="#e9e9e9" stroke="#bdbdbd" stroke-width="0.6"/><path d="M11 23.2H19V27.2L17 28.6H13L11 27.2Z" fill="#222"/><path d="M12.6 13L13.8 23M17.4 13L16.2 23" stroke="#555" stroke-width="0.5"/><path d="M14.2 17H15.8V23.5H14.2Z" fill="#999"/></svg>
<div class="t " style="left:1069.5px;top:614.2px;font-size:11px;color:#f4f4f4;"><span class="c c12">背景</span></div>
<svg class="i" style="left:1322px;top:615px;" width="11" height="12.5" viewBox="0 0 11 12.5"><path d="M2.8 5.6V3.6A2.7 2.7 0 0 1 8.2 3.6V5.6" fill="none" stroke="#dedede" stroke-width="1.2"/><rect x="0.8" y="5.6" width="9.4" height="6.2" fill="none" stroke="#dedede" stroke-width="1.2"/><rect x="4.6" y="7.6" width="1.8" height="2.2" fill="#dedede"/></svg>
<svg class="i" style="left:1161.5px;top:710.5px;" width="15" height="8.5" viewBox="0 0 15 8.5"><rect x="0.7" y="0.9" width="7.6" height="6.4" rx="3.2" fill="none" stroke="#8a8a8a" stroke-width="1.3"/><rect x="6.7" y="0.9" width="7.6" height="6.4" rx="3.2" fill="none" stroke="#8a8a8a" stroke-width="1.3"/><path d="M4.6 4.1H10.4" stroke="#8a8a8a" stroke-width="1.3"/></svg>
<div class="t " style="left:1190px;top:705.5px;font-size:14px;color:#8a8a8a;font-family:'Liberation Serif',serif;font-style:italic;font-weight:bold;letter-spacing:-0.5px">fx</div>
<svg class="i" style="left:1215.5px;top:708.8px;" width="14" height="10" viewBox="0 0 14 10"><rect x="0" y="0" width="13.6" height="9.8" rx="0.8" fill="#dcdcdc"/><circle cx="6.8" cy="4.9" r="2.9" fill="#4a4a4a"/></svg>
<svg class="i" style="left:1244px;top:708.5px;" width="16" height="13" viewBox="0 0 16 13"><circle cx="6" cy="5.6" r="5" fill="none" stroke="#dcdcdc" stroke-width="1.3"/><path d="M2.4 9.2A5 5 0 0 1 9.6 2Z" fill="#dcdcdc"/><path d="M10.6 10.6H14L12.3 12.6Z" fill="#dcdcdc"/></svg>
<svg class="i" style="left:1270px;top:708.8px;" width="14" height="10" viewBox="0 0 14 10"><path d="M0.2 1.2Q0.2 0.2 1.2 0.2H4.8L6.2 1.8H12.6Q13.4 1.8 13.4 2.6V9Q13.4 9.8 12.6 9.8H1Q0.2 9.8 0.2 9Z" fill="#dcdcdc"/></svg>
<svg class="i" style="left:1297.5px;top:708.8px;" width="12" height="11.5" viewBox="0 0 12 11.5"><path d="M0.8 0.8H11V10.4H4.4L0.8 6.8Z" fill="none" stroke="#dcdcdc" stroke-width="1.5"/><path d="M0.8 6.8H4.4V10.4Z" fill="#dcdcdc"/></svg>
<svg class="i" style="left:1325px;top:708.5px;" width="11" height="12.5" viewBox="0 0 11 12.5"><path d="M0.3 2.4H10.7" stroke="#8a8a8a" stroke-width="1.2"/><path d="M3.6 1.6V0.5H7.4V1.6" fill="none" stroke="#8a8a8a" stroke-width="1"/><path d="M1.5 3.6H9.5V12H1.5Z" fill="none" stroke="#8a8a8a" stroke-width="1.1"/><path d="M3.7 5V10.6M5.5 5V10.6M7.3 5V10.6" stroke="#8a8a8a" stroke-width="0.9"/></svg>
</div>
</body></html>
